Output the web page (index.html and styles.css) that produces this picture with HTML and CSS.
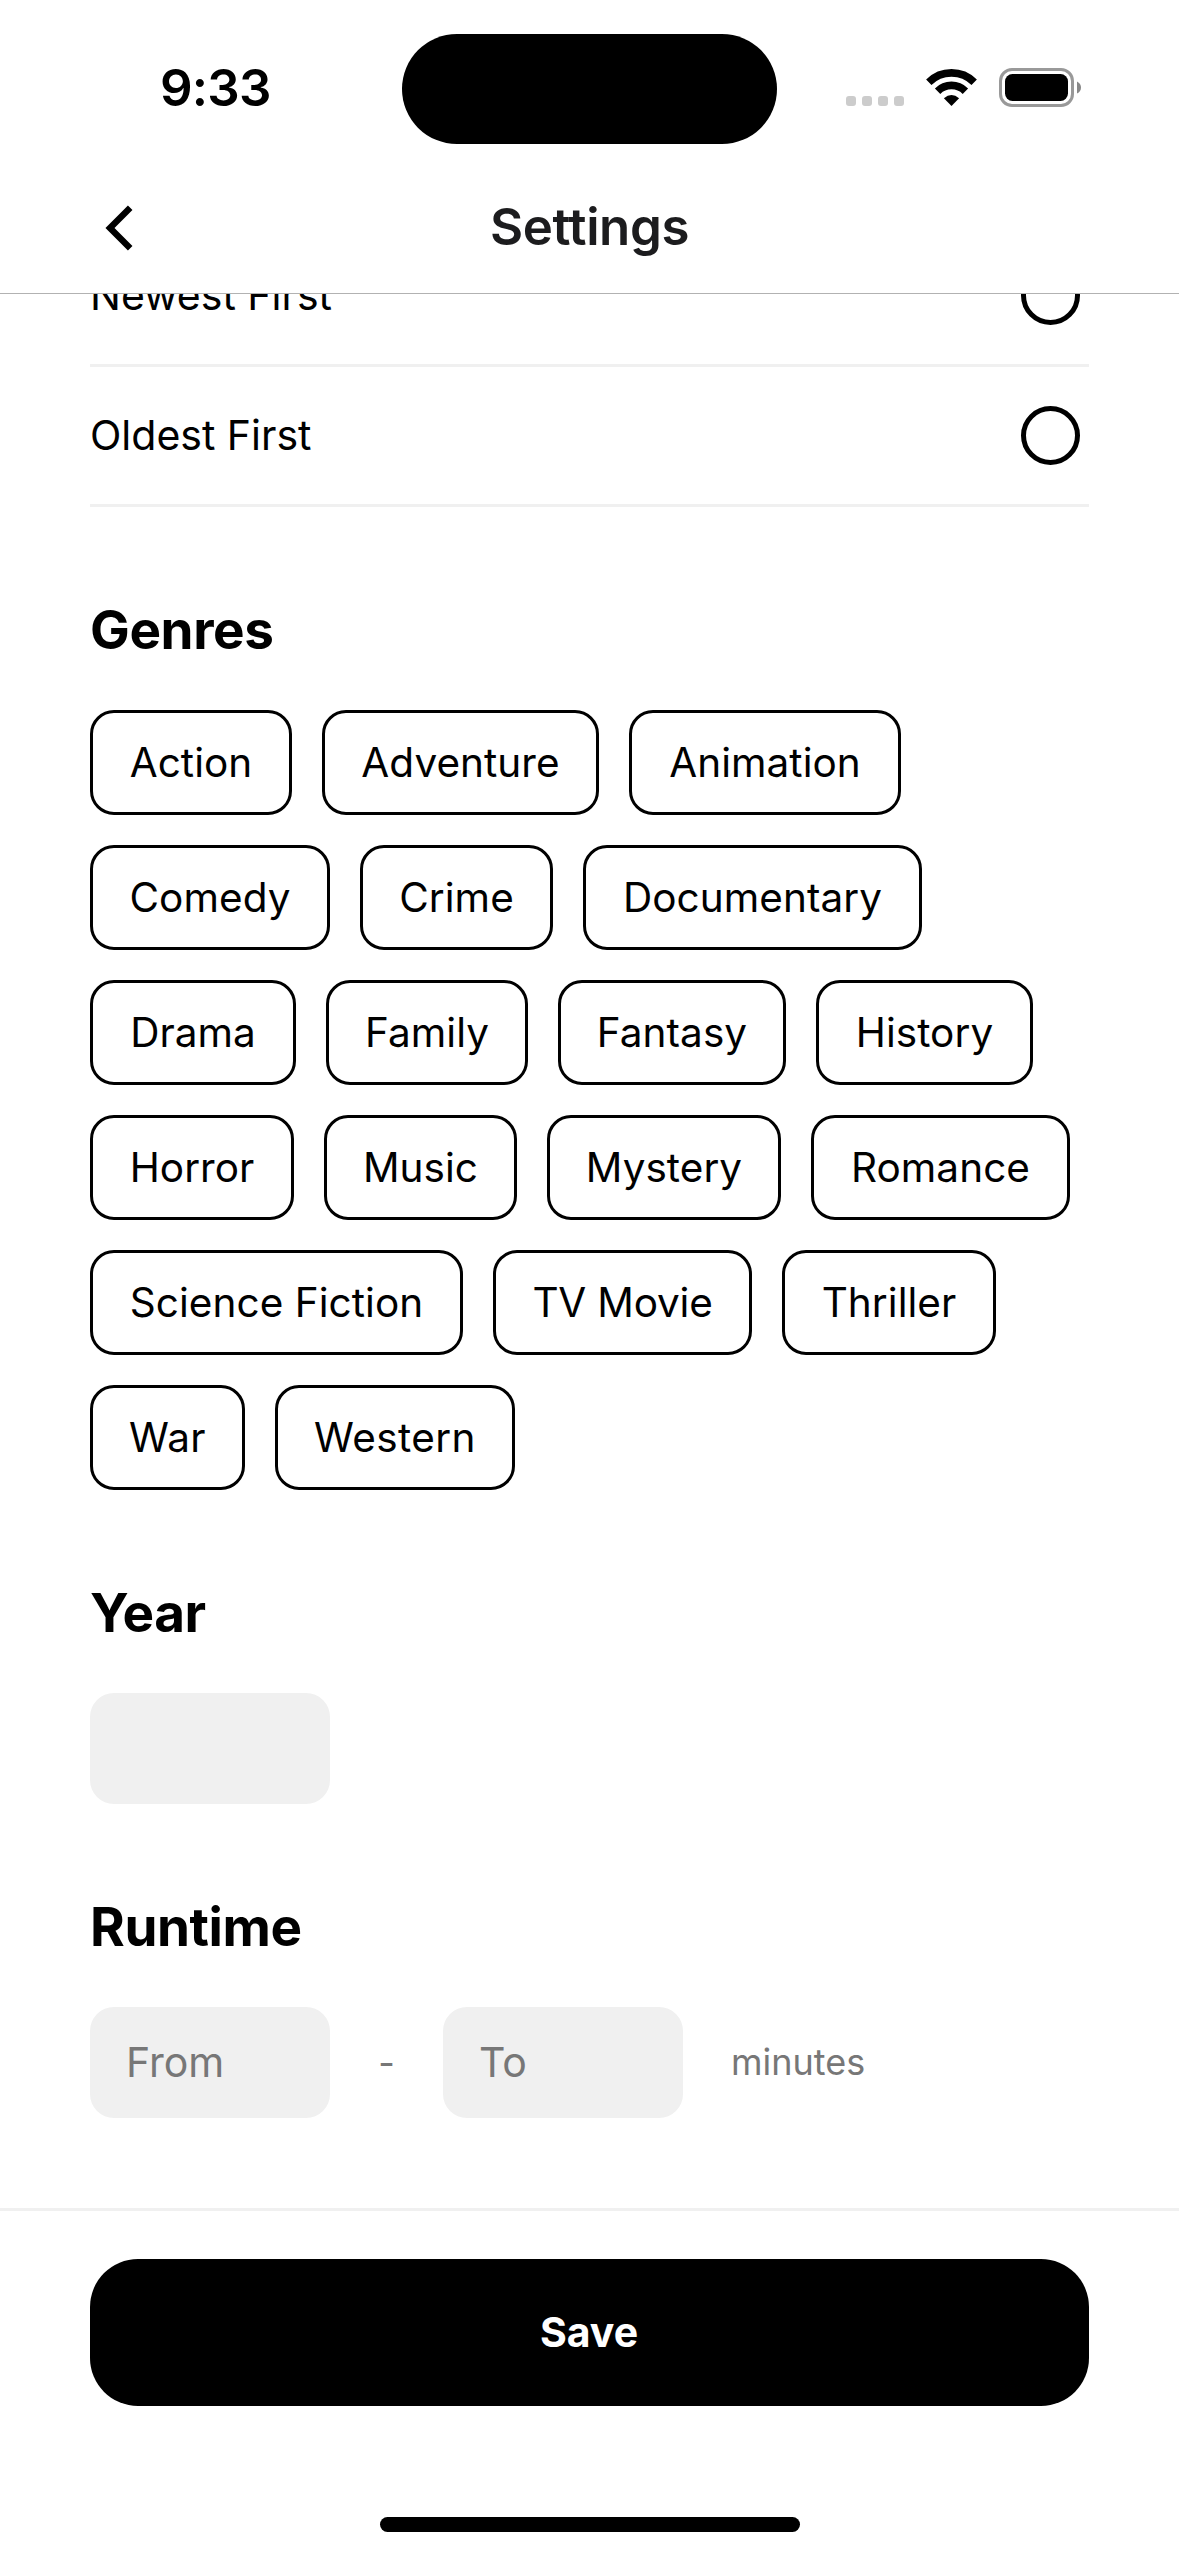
FILE: index.html
```html
<!DOCTYPE html>
<html lang="en">
<head>
<meta charset="utf-8">
<title>Settings</title>
<link rel="stylesheet" href="styles.css">
</head>
<body>
<div class="screen">
  <div class="status">
    <div class="time">9:33</div>
    <div class="island"></div>
    <svg class="indicators" width="236" height="40" viewBox="0 0 236 40">
      <g fill="#ccc">
        <rect x="0" y="28" width="10" height="10" rx="3"/>
        <rect x="16" y="28" width="10" height="10" rx="3"/>
        <rect x="32" y="28" width="10" height="10" rx="3"/>
        <rect x="48" y="28" width="10" height="10" rx="3"/>
      </g>
      <g fill="none" stroke="#000" stroke-width="7.6">
        <path d="M82.8 14.2a32.2 32.2 0 0 1 45.4 0"/>
        <path d="M91.6 23.2a19.6 19.6 0 0 1 27.8 0"/>
      </g>
      <path d="M105.5 38l-7.6-7.7q7.6-6.4 15.200 0z"/>
      <rect x="154.500" y="1.500" width="72" height="36" rx="11.500" fill="none" stroke="#999" stroke-width="3"/>
      <rect x="159" y="6" width="63" height="27" rx="7.500"/>
      <path d="M231 13.500q4 2 4 6t-4 6z" fill="#888"/>
    </svg>
  </div>
  <header class="nav">
    <svg class="back" width="30" height="46" viewBox="0 0 30 46"><path d="M26.200 2.800L6 23l20.200 20.200" fill="none" stroke="#000" stroke-width="6.400"/></svg>
    <h1 class="title">Settings</h1>
  </header>
  <main class="content">
    <div class="option newest"><span>Newest First</span><i class="radio"></i></div>
    <div class="option oldest"><span>Oldest First</span><i class="radio"></i></div>
    <h2 class="heading genres">Genres</h2>
    <div class="chips">
      <span class="chip action">Action</span><span class="chip adventure">Adventure</span><span class="chip animation">Animation</span>
      <span class="chip comedy">Comedy</span><span class="chip crime">Crime</span><span class="chip documentary">Documentary</span>
      <span class="chip drama">Drama</span><span class="chip family">Family</span><span class="chip fantasy">Fantasy</span><span class="chip history">History</span>
      <span class="chip horror">Horror</span><span class="chip music">Music</span><span class="chip mystery">Mystery</span><span class="chip romance">Romance</span>
      <span class="chip scifi">Science Fiction</span><span class="chip tv">TV Movie</span><span class="chip thriller">Thriller</span>
      <span class="chip war">War</span><span class="chip western">Western</span>
    </div>
    <h2 class="heading">Year</h2>
    <div class="fields"><div class="field"></div></div>
    <h2 class="heading">Runtime</h2>
    <div class="fields">
      <div class="field">From</div>
      <span class="dash">-</span>
      <div class="field">To</div>
      <span class="unit">minutes</span>
    </div>
  </main>
  <footer class="footer">
    <div class="save">Save</div>
    <div class="home"></div>
  </footer>
</div>
</body>
</html>
```

FILE: styles.css
```css
* { box-sizing: border-box; }
body { margin: 0; background: #fff; color: #000; font-family: Inter, "Liberation Sans", sans-serif; }
h1, h2 { margin: 0; }
.screen { width: 1179px; height: 2556px; display: flex; flex-direction: column; overflow: hidden; }

.status { height: 177px; flex: none; display: flex; align-items: flex-start; }
.time { width: 402px; padding: 57px 0 0 160px; font-size: 51px; line-height: 62px; font-weight: 600; letter-spacing: -0.8px; }
.island { width: 375px; height: 110px; margin-top: 34px; border-radius: 55px; background: #000; }
.indicators { margin: 68px 0 0 69px; }

.nav { height: 117px; flex: none; display: grid; grid-template-columns: 1fr auto 1fr; align-items: center; padding: 0 90px 14px 104px; border-bottom: 1px solid #b2b2b2; }
.title { font-size: 51px; line-height: 60px; font-weight: 600; color: #1c1c1e; letter-spacing: -0.4px; margin: -2px 0 0 -14px; }

.content { height: 1914px; flex: none; overflow: hidden; padding: 0 90px; }
.option { height: 140px; border-bottom: 3px solid #f0f0f0; display: flex; justify-content: space-between; align-items: center; font-size: 41px; letter-spacing: 0; padding-right: 9.500px; }
.option span { margin-top: -2px; }
.newest { margin-top: -67px; }
.radio { width: 59px; height: 59px; border: 5px solid #000; border-radius: 50%; }

.heading { font-size: 53px; line-height: 64px; font-weight: 700; letter-spacing: -0.400px; margin: 91px 0 48px; }
.chips { display: flex; flex-wrap: wrap; gap: 30px; }
.chip { height: 105px; border: 3px solid #000; border-radius: 24px; padding-bottom: 1px; display: flex; align-items: center; justify-content: center; font-size: 40.500px; letter-spacing: 0.050px; white-space: nowrap; }
.action { width: 202px; }
.adventure { width: 277px; }
.animation { width: 272px; }
.comedy { width: 240px; }
.crime { width: 193px; }
.documentary { width: 339px; }
.drama { width: 206px; }
.family { width: 202px; }
.fantasy { width: 228px; }
.history { width: 217px; }
.horror { width: 204px; }
.music { width: 193px; }
.mystery { width: 234px; }
.romance { width: 259px; }
.scifi { width: 373px; }
.tv { width: 259px; letter-spacing: -0.200px; }
.thriller { width: 214px; }
.war { width: 155px; letter-spacing: 0.400px; }
.western { width: 240px; letter-spacing: 0.400px; }

.fields { display: flex; align-items: center; }
.field { width: 240px; height: 111px; border-radius: 24px; background: #f0f0f0; padding: 0 36px 2px; display: flex; align-items: center; font-size: 41px; color: #777; }
.dash { width: 113px; text-align: center; font-size: 36px; color: #777; }
.unit { margin: -2px 0 0 48px; font-size: 36px; color: #777; }

.footer { height: 348px; flex: none; border-top: 3px solid #f0f0f0; padding: 48px 90px 0; display: flex; flex-direction: column; align-items: center; }
.save { width: 100%; height: 147px; border-radius: 48px; background: #000; color: #fff; display: flex; align-items: center; justify-content: center; padding: 0 1px 2px 0; font-size: 41px; font-weight: 700; }
.home { width: 420px; height: 15px; margin-top: 111px; border-radius: 8px; background: #000; }
```
